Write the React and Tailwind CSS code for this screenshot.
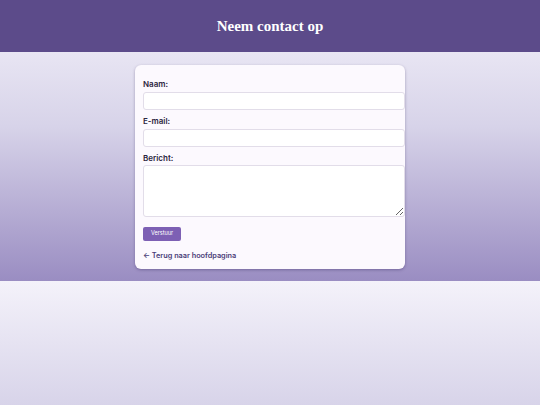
export default function App() {
  const labelCls = 'block text-[8px] leading-[12px] font-semibold text-[#2b2540] mb-[2px]';
  const fieldCls = 'block w-[262px] bg-white border border-[#e2dde9] rounded-[3px] outline-none';

  return (
    <div className="h-[405px] flex flex-col font-['Inter','Noto_Sans',sans-serif] overflow-hidden">
      {/* page body, gradient ends where the content ends */}
      <div className="bg-[linear-gradient(to_bottom,#f4f2fa_0%,#d7d3e9_45%,#9a8dc2_100%)]">
        <header className="h-[52px] bg-[#5c4b8a] flex items-center justify-center">
          <h1 className="text-white text-[15px] font-bold font-['Liberation_Serif','DejaVu_Serif',serif]">
            Neem contact op
          </h1>
        </header>

        <div className="flex justify-center pt-[13px] pb-[12px]">
          <form
            className="w-[270px] bg-[#fcf9fe] rounded-[6px] shadow-[0_1px_3px_rgba(40,25,80,0.35)] pl-2 pt-[13px] pb-[7px]"
            onSubmit={(e) => e.preventDefault()}
          >
            <label htmlFor="naam" className={labelCls}>Naam:</label>
            <input id="naam" type="text" className={`${fieldCls} h-[18px]`} />

            <label htmlFor="email" className={`${labelCls} mt-[5px]`}>E-mail:</label>
            <input id="email" type="email" className={`${fieldCls} h-[18px]`} />

            <label htmlFor="bericht" className={`${labelCls} mt-[5px]`}>Bericht:</label>
            <textarea id="bericht" className={`${fieldCls} h-[52px] -mt-[1px] resize-y`} />

            <button
              type="submit"
              className="mt-[10px] block w-[38px] h-[14px] rounded-[2px] bg-[#7d60b4] text-white text-[5.5px] leading-none"
            >
              Verstuur
            </button>

            <a href="#" className="block mt-[9px] text-[7.3px] leading-[12px] font-semibold text-[#4a3c78]">
              ← Terug naar hoofdpagina
            </a>
          </form>
        </div>
      </div>

      {/* background repeats below the body */}
      <div className="flex-1 bg-[linear-gradient(to_bottom,#f4f2fa_0%,#d7d3e9_45%,#9a8dc2_100%)] bg-[length:100%_281px] bg-no-repeat" />
    </div>
  );
}
